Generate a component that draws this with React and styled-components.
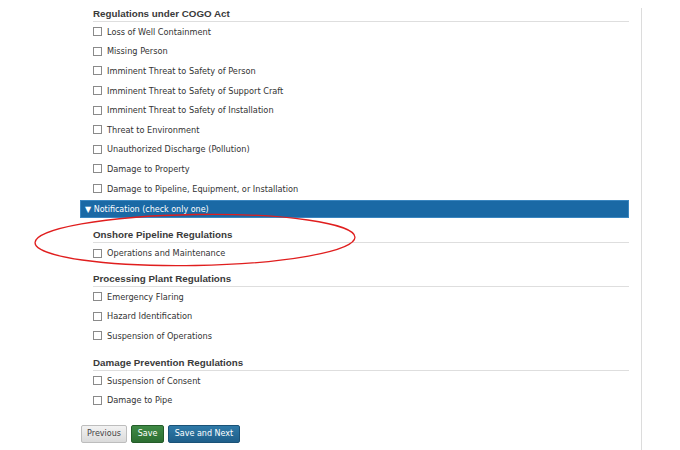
import React from "react";
import styled, { createGlobalStyle } from "styled-components";

const Global = createGlobalStyle`
  html, body { margin: 0; padding: 0; background: #fff; }
  body { width: 680px; height: 450px; overflow: hidden; }
`;

const Page = styled.div`
  position: relative;
  padding-left: 80px;
  padding-top: 8px;
`;

const Frame = styled.div`
  width: 549px;
  padding-right: 12px;
  border-right: 1px solid #dcdcdc;
  min-height: 442px;
`;

const Section = styled.div`
  padding-left: 13px;
  margin-top: ${(p) => p.$gap || 0}px;
`;

const Heading = styled.div`
  font-family: "Liberation Sans", Arial, sans-serif;
  font-weight: bold;
  font-size: 9.8px;
  line-height: 12px;
  height: 14px;
  color: #3a3a3a;
  border-bottom: 1px solid #dedede;
  box-sizing: border-box;
`;

const Row = styled.label`
  display: flex;
  align-items: center;
  height: 19.6px;
  font-family: "DejaVu Sans", Verdana, sans-serif;
  font-size: 8.2px;
  color: #333;
`;

const Box = styled.span`
  width: 7px;
  height: 7px;
  border: 1px solid #8a8a8a;
  background: #fff;
  margin-right: 5px;
  flex: none;
`;

const Bar = styled.div`
  margin-top: 2px;
  height: 18px;
  background: #1a69a5;
  border: 1px solid #3a86c0;
  box-sizing: border-box;
  display: flex;
  align-items: center;
  padding-left: 4px;
  padding-top: 1px;
  font-family: "DejaVu Sans", Verdana, sans-serif;
  font-size: 8px;
  color: #fff;
`;

const Buttons = styled.div`
  display: flex;
  gap: 4px;
  margin-top: 15px;
  padding-left: 1px;
`;

const Button = styled.button`
  height: 18px;
  width: ${(p) => p.$w}px;
  padding: 0;
  border-radius: 2px;
  font-family: "DejaVu Sans", Verdana, sans-serif;
  font-size: 8px;
  cursor: pointer;
  ${(p) =>
    p.$kind === "green"
      ? `background: linear-gradient(#3f8a45, #2c6e32); border: 1px solid #245c29; color: #fff;`
      : p.$kind === "blue"
      ? `background: linear-gradient(#2f7aa8, #1f5f8a); border: 1px solid #1a5277; color: #fff;`
      : `background: linear-gradient(#f2f2f2, #dadada); border: 1px solid #bdbdbd; color: #444;`}
`;

const Annotation = styled.svg`
  position: absolute;
  left: 0;
  top: 0;
  pointer-events: none;
`;

const Check = ({ children }) => (
  <Row>
    <Box />
    {children}
  </Row>
);

const cogo = [
  "Loss of Well Containment",
  "Missing Person",
  "Imminent Threat to Safety of Person",
  "Imminent Threat to Safety of Support Craft",
  "Imminent Threat to Safety of Installation",
  "Threat to Environment",
  "Unauthorized Discharge (Pollution)",
  "Damage to Property",
  "Damage to Pipeline, Equipment, or Installation",
];

export default function App() {
  return (
    <Page>
      <Global />
      <Frame>
        <Section>
          <Heading>Regulations under COGO Act</Heading>
          {cogo.map((t) => (
            <Check key={t}>{t}</Check>
          ))}
        </Section>
        <Bar>▼ Notification (check only one)</Bar>
        <Section $gap={11}>
          <Heading>Onshore Pipeline Regulations</Heading>
          <Check>Operations and Maintenance</Check>
        </Section>
        <Section $gap={10}>
          <Heading>Processing Plant Regulations</Heading>
          <Check>Emergency Flaring</Check>
          <Check>Hazard Identification</Check>
          <Check>Suspension of Operations</Check>
        </Section>
        <Section $gap={11}>
          <Heading>Damage Prevention Regulations</Heading>
          <Check>Suspension of Consent</Check>
          <Check>Damage to Pipe</Check>
        </Section>
        <Buttons>
          <Button $w={46}>Previous</Button>
          <Button $w={33} $kind="green">Save</Button>
          <Button $w={72} $kind="blue">Save and Next</Button>
        </Buttons>
      </Frame>
      <Annotation width="680" height="450">
        <ellipse
          cx="195"
          cy="240"
          rx="160"
          ry="25.5"
          transform="rotate(-1 195 240)"
          fill="none"
          stroke="#e01e1e"
          strokeWidth="1.3"
        />
      </Annotation>
    </Page>
  );
}
